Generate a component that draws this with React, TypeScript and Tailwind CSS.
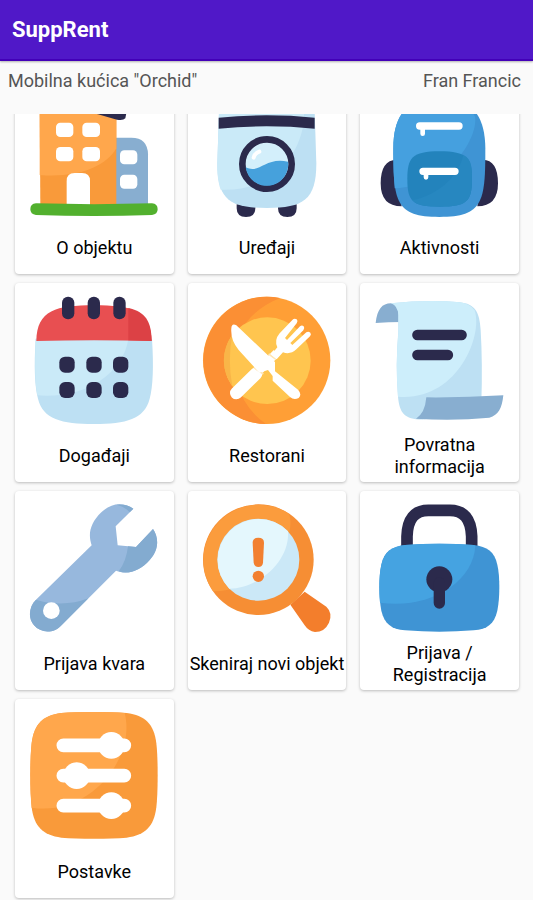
import type { ReactNode } from "react";

const NAVY = "#2b2a4c";
const ICON = "size-32 shrink-0 overflow-visible";

function BuildingIcon() {
  return (
    <svg viewBox="91 -51 384 384" className={ICON} aria-hidden="true">
      <path d="M340 98H395Q444 98 445 148V300H340Z" fill="#88aed0" />
      <path d="M120 -20L350 30V300H122Z" fill="#f99a3a" />
      <path d="M120 -20L350 30V130C320 185 230 220 120 210Z" fill="#ffa74c" />
      <path d="M115 -42Q112 -22 130 -18L295 28L352 44Q370 48 377 40L382 14Z" fill={NAVY} />
      <g fill="#fff">
        <rect x="169" y="53" width="52" height="43" rx="13" />
        <rect x="248" y="53" width="53" height="43" rx="13" />
        <rect x="169" y="126" width="52" height="43" rx="13" />
        <rect x="248" y="126" width="53" height="43" rx="13" />
        <rect x="361" y="136" width="52" height="42" rx="13" />
        <rect x="361" y="209" width="52" height="42" rx="13" />
        <path d="M201 300V228Q201 204 225 204H247Q271 204 271 228V300Z" />
      </g>
      <path d="M109 295Q283 300 457 295Q474 296 474 313Q474 328 457 330Q283 336 109 330Q92 328 92 313Q92 296 109 295Z" fill="#52b02e" />
    </svg>
  );
}

function WasherIcon() {
  return (
    <svg viewBox="69 -51 384 384" className={ICON} aria-hidden="true">
      <path d="M170 298H226V310Q226 336 198 336Q170 336 170 310ZM294 298H350V310Q350 336 322 336Q294 336 294 310Z" fill={NAVY} />
      <path d="M118 -10Q120 -48 260 -50Q400 -48 403 -10L409 175C409 285 370 309 261 309C150 309 112 285 112 175Z" fill="#bde0f3" />
      <path d="M118 -10Q120 -48 260 -50Q350 -50 372 -35V50C350 190 240 260 122 254C110 220 112 180 112 175Z" fill="#caeaf8" />
      <path d="M116 38Q260 24 404 38V71Q260 57 116 71Z" fill={NAVY} />
      <circle cx="261" cy="177" r="74" fill="#d3effb" stroke={NAVY} strokeWidth="20" />
      <path d="M197 187C240 208 255 155 324 170A64 64 0 0 1 197 187Z" fill="#46a1dc" />
      <path d="M221 158Q224 145 238 140" stroke="#fff" strokeWidth="12" strokeLinecap="round" fill="none" />
    </svg>
  );
}

function BackpackIcon() {
  return (
    <svg viewBox="68 -51 384 384" className={ICON} aria-hidden="true">
      <path d="M130 164Q82 165 82 235Q82 304 145 304ZM388 164Q434 165 434 235Q434 304 372 304Z" fill={NAVY} />
      <path d="M120 130C120 20 170 -20 258 -20C346 -20 395 20 396 130C396 290 390 336 258 336C126 336 120 290 120 130Z" fill="#3f94d4" />
      <path d="M120 130C120 20 170 -20 258 -20C315 -20 345 -5 365 35C375 90 300 240 124 250Q119 190 120 130Z" fill="#45a0df" />
      <path d="M162 222C162 160 175 139 259 139C342 139 356 160 356 222C356 290 340 305 259 305C178 305 162 290 162 222Z" fill="#2383bc" />
      <path d="M330 150C356 162 356 190 356 222C356 290 340 305 259 305C218 305 190 302 177 286C255 270 315 215 330 150Z" fill="#2787c0" />
      <path d="M199 63H317M209 199H305" stroke="#fff" strokeLinecap="round" fill="none" strokeWidth="22" />
      <path d="M208 66V86M218 202V217" stroke="#fff" strokeLinecap="round" fill="none" strokeWidth="14" />
    </svg>
  );
}

function CalendarIcon() {
  return (
    <svg viewBox="91 48 384 384" className={ICON} aria-hidden="true">
      <path d="M108 176H457Q465 300 450 356C434 417 380 432 283 432C185 432 130 417 115 356Q100 300 108 176Z" fill="#bde0f3" />
      <path d="M108 176H386C370 285 250 357 113 346Q103 300 108 176Z" fill="#caeaf8" />
      <path d="M110 183C112 90 170 76 283 76C395 76 454 90 456 183Q283 178 110 183Z" fill="#e84f51" />
      <path d="M386 84C438 95 455 125 456 183L386 181Z" fill="#dc4145" />
      <g fill={NAVY}>
        <rect x="187" y="50" width="37" height="68" rx="18" />
        <rect x="264" y="50" width="37" height="68" rx="18" />
        <rect x="341" y="50" width="37" height="68" rx="18" />
        <rect x="179" y="230" width="46" height="48" rx="17" />
        <rect x="260" y="230" width="46" height="48" rx="17" />
        <rect x="340" y="230" width="46" height="48" rx="17" />
        <rect x="179" y="306" width="46" height="48" rx="17" />
        <rect x="260" y="306" width="46" height="48" rx="17" />
        <rect x="340" y="306" width="46" height="48" rx="17" />
      </g>
    </svg>
  );
}

function RestaurantIcon() {
  return (
    <svg viewBox="69 48 384 384" className={ICON} aria-hidden="true">
      <circle cx="260" cy="241" r="191" fill="#ff9f36" />
      <path d="M300 54C190 95 130 210 168 300Q190 385 258 432A191 191 0 1 1 300 54Z" fill="#fb8f34" />
      <circle cx="262" cy="242" r="130" fill="#ffc54f" />
      <path d="M157 164A130 130 0 0 0 157 319Q142 240 157 164Z" fill="#f9b548" />
      <path d="M225 285L290 218" stroke="#fff" strokeWidth="24" />
      <path d="M169 339L228 281" stroke="#fff" strokeWidth="38" strokeLinecap="round" />
      <path d="M222 263L250 282M266 222L288 238" stroke="#ffe6b5" strokeWidth="5" />
      <path d="M274 224L292 202Q282 180 299 160L337 120Q343 114 350 118Q355 123 350 130L315 174L321 180L360 139Q366 134 371 139Q375 144 370 151L331 189L337 195L379 157Q385 153 391 158Q395 163 390 169L349 208Q331 225 309 217L290 238Z" fill="#fff" />
      <path d="M154 145Q155 129 169 136L285 246V274L354 329Q367 343 356 354Q342 362 330 351L278 302V288L264 270L238 278L176 210Q151 180 154 145Z" fill="#fff" />
    </svg>
  );
}

function ScrollIcon() {
  return (
    <svg viewBox="68 48 384 384" className={ICON} aria-hidden="true">
      <path d="M67 129C72 88 86 70 113 70Q137 72 145 88V126Q105 126 67 129Z" fill="#88aed0" />
      <path d="M113 70Q225 58 320 67C364 72 379 95 382 150Q388 250 384 370L215 418C155 420 139 402 134 350Q126 255 135 155V105Q134 77 113 70Z" fill="#bde0f3" />
      <path d="M113 70Q225 58 320 67Q350 71 364 91C390 170 310 365 134 350Q126 255 135 155V105Q134 77 113 70Z" fill="#cdeefb" />
      <path d="M219 352Q335 353 450 346C446 385 436 405 408 413Q300 424 188 416Q215 400 219 352Z" fill="#88aed0" />
      <path d="M192 165H325M192 225H284" stroke={NAVY} strokeWidth="31" strokeLinecap="round" />
    </svg>
  );
}

function WrenchIcon() {
  return (
    <svg viewBox="91 48 384 384" className={ICON} aria-hidden="true">
      <path d="M401 62L348 115L354 172L409 177L460 123C478 150 478 185 450 216C422 248 385 262 349 248L187 410C164 437 124 437 103 412C84 390 88 355 109 335L276 172C264 138 272 105 305 73C335 44 370 42 401 62Z" fill="#97b8dd" />
      <path d="M385 175L409 177L460 123C478 150 478 185 450 216C422 248 385 261 357 250Q380 220 385 175ZM109 335Q190 360 266 331L187 410C164 437 124 437 103 412C84 390 88 355 109 335ZM350 50Q380 47 401 62L390 73Q375 55 350 50Z" fill="#83abd0" />
      <circle cx="155" cy="368" r="25" fill="#fff" />
    </svg>
  );
}

function ScanIcon() {
  return (
    <svg viewBox="69 48 384 384" className={ICON} aria-hidden="true">
      <path d="M331 350L374 311L439 356Q459 375 447 404Q434 432 405 432Q385 429 374 412Z" fill="#f37e2c" />
      <circle cx="235" cy="215" r="166" fill="#f68e34" />
      <path d="M328 78C352 170 240 312 99 310A166 166 0 0 1 328 78Z" fill="#fb9c3d" />
      <circle cx="235" cy="215" r="123" fill="#cbe8f7" />
      <path d="M324 130C330 220 235 302 148 302A123 123 0 0 1 324 130Z" fill="#e4f7fd" />
      <path d="M218 164Q218 149 235 149Q252 149 252 164L249 224Q247 237 235 237Q223 237 221 224Z" fill="#f28030" />
      <circle cx="235" cy="265" r="17" fill="#f28030" />
    </svg>
  );
}

function LockIcon() {
  return (
    <svg viewBox="68 48 384 384" className={ICON} aria-hidden="true">
      <path d="M161 180V145Q163 67 225 67H290Q352 67 355 145V180" fill="none" stroke={NAVY} strokeWidth="35" />
      <path d="M78 297Q78 257 84 230C93 190 115 176 155 171Q258 163 361 171C402 176 423 190 432 230Q438 257 438 297Q438 337 432 368C423 408 402 423 361 427Q258 435 155 427C115 423 93 408 84 368Q78 337 78 297Z" fill="#3f94d4" />
      <path d="M78 297Q78 257 84 230C93 190 115 176 155 171Q258 163 361 171L366 173C360 285 225 365 80 344Q78 325 78 297Z" fill="#45a3e1" />
      <circle cx="258" cy="274" r="39" fill={NAVY} />
      <path d="M258 285V345" stroke={NAVY} strokeWidth="34" strokeLinecap="round" />
    </svg>
  );
}

function SettingsIcon() {
  return (
    <svg viewBox="91 66 384 384" className={ICON} aria-hidden="true">
      <path d="M92 256Q92 195 96 160C103 102 130 76 185 69Q225 66 283 66Q341 66 381 69C436 76 463 102 470 160Q474 195 474 256Q474 317 470 352C463 410 436 436 381 443Q341 446 283 446Q225 446 185 443C130 436 103 410 96 352Q92 317 92 256Z" fill="#f99a3a" />
      <path d="M92 256Q92 195 96 160C103 102 130 76 185 69Q225 66 283 66Q335 66 375 69C410 205 270 380 96 353Q92 317 92 256Z" fill="#ffa74c" />
      <path d="M191 166H374M191 257H374M191 347H374" stroke="#fff" strokeWidth="41" strokeLinecap="round" />
      <g fill="#fff">
        <circle cx="335" cy="166" r="40" />
        <circle cx="231" cy="257" r="40" />
        <circle cx="335" cy="347" r="40" />
      </g>
    </svg>
  );
}

const tiles: { lines: string[]; icon: ReactNode }[] = [
  { lines: ["O objektu"], icon: <BuildingIcon /> },
  { lines: ["Uređaji"], icon: <WasherIcon /> },
  { lines: ["Aktivnosti"], icon: <BackpackIcon /> },
  { lines: ["Događaji"], icon: <CalendarIcon /> },
  { lines: ["Restorani"], icon: <RestaurantIcon /> },
  { lines: ["Povratna", "informacija"], icon: <ScrollIcon /> },
  { lines: ["Prijava kvara"], icon: <WrenchIcon /> },
  { lines: ["Skeniraj novi objekt"], icon: <ScanIcon /> },
  { lines: ["Prijava /", "Registracija"], icon: <LockIcon /> },
  { lines: ["Postavke"], icon: <SettingsIcon /> },
];

export default function App() {
  return (
    <div className="flex min-h-screen flex-col bg-[#fafafa] font-[Roboto,sans-serif]">
      <header className="z-10 flex h-[61px] shrink-0 items-center border-b-2 border-[#4300b8] bg-[#5018c8] px-3 pt-px shadow-[0_1px_2px_rgba(0,0,0,0.3)]">
        <h1 className="text-[22px] leading-7 font-bold text-white">SuppRent</h1>
      </header>
      <div className="flex h-[53px] shrink-0 justify-between pt-2 pr-3 pl-2 text-lg leading-6 text-[#555]">
        <p>Mobilna kućica "Orchid"</p>
        <p>Fran Francic</p>
      </div>
      <main className="overflow-hidden">
        <div className="-mt-[39px] grid grid-cols-3 gap-x-[14px] gap-y-[9px] pr-[14px] pb-[2px] pl-[15px]">
          {tiles.map((tile) => (
            <button
              key={tile.lines[0]}
              type="button"
              className="flex h-[199px] flex-col items-center rounded-[4px] bg-white pt-[13px] shadow-[0_1px_3px_rgba(0,0,0,0.25)]"
            >
              {tile.icon}
              <span className="mt-[6px] flex flex-1 flex-col justify-center text-lg leading-[22px] whitespace-nowrap text-black">
                {tile.lines.map((line) => (
                  <span key={line}>{line}</span>
                ))}
              </span>
            </button>
          ))}
        </div>
      </main>
    </div>
  );
}
